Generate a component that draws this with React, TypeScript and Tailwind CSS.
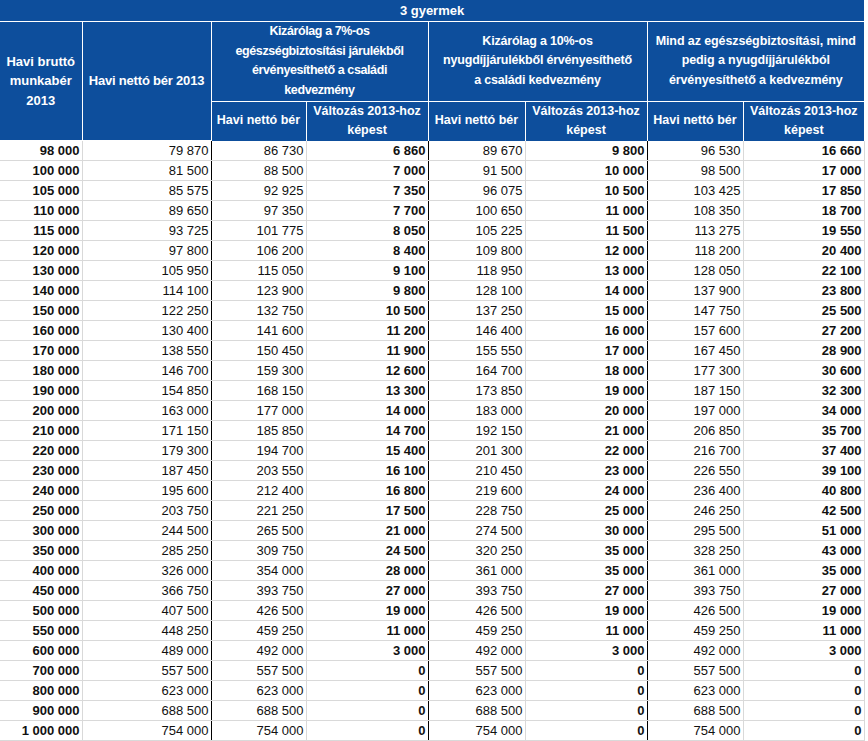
import React from "react";

const rows: number[][] = [
  [98000, 79870, 86730, 6860, 89670, 9800, 96530, 16660],
  [100000, 81500, 88500, 7000, 91500, 10000, 98500, 17000],
  [105000, 85575, 92925, 7350, 96075, 10500, 103425, 17850],
  [110000, 89650, 97350, 7700, 100650, 11000, 108350, 18700],
  [115000, 93725, 101775, 8050, 105225, 11500, 113275, 19550],
  [120000, 97800, 106200, 8400, 109800, 12000, 118200, 20400],
  [130000, 105950, 115050, 9100, 118950, 13000, 128050, 22100],
  [140000, 114100, 123900, 9800, 128100, 14000, 137900, 23800],
  [150000, 122250, 132750, 10500, 137250, 15000, 147750, 25500],
  [160000, 130400, 141600, 11200, 146400, 16000, 157600, 27200],
  [170000, 138550, 150450, 11900, 155550, 17000, 167450, 28900],
  [180000, 146700, 159300, 12600, 164700, 18000, 177300, 30600],
  [190000, 154850, 168150, 13300, 173850, 19000, 187150, 32300],
  [200000, 163000, 177000, 14000, 183000, 20000, 197000, 34000],
  [210000, 171150, 185850, 14700, 192150, 21000, 206850, 35700],
  [220000, 179300, 194700, 15400, 201300, 22000, 216700, 37400],
  [230000, 187450, 203550, 16100, 210450, 23000, 226550, 39100],
  [240000, 195600, 212400, 16800, 219600, 24000, 236400, 40800],
  [250000, 203750, 221250, 17500, 228750, 25000, 246250, 42500],
  [300000, 244500, 265500, 21000, 274500, 30000, 295500, 51000],
  [350000, 285250, 309750, 24500, 320250, 35000, 328250, 43000],
  [400000, 326000, 354000, 28000, 361000, 35000, 361000, 35000],
  [450000, 366750, 393750, 27000, 393750, 27000, 393750, 27000],
  [500000, 407500, 426500, 19000, 426500, 19000, 426500, 19000],
  [550000, 448250, 459250, 11000, 459250, 11000, 459250, 11000],
  [600000, 489000, 492000, 3000, 492000, 3000, 492000, 3000],
  [700000, 557500, 557500, 0, 557500, 0, 557500, 0],
  [800000, 623000, 623000, 0, 623000, 0, 623000, 0],
  [900000, 688500, 688500, 0, 688500, 0, 688500, 0],
  [1000000, 754000, 754000, 0, 754000, 0, 754000, 0],
];

// 1000000 -> "1 000 000"
const fmt = (n: number) => String(n).replace(/\B(?=(\d{3})+(?!\d))/g, " ");

const boldCols = [0, 3, 5, 7];
const blackRight = [1, 3, 5];

export default function App() {
  return (
    <div className="bg-white w-[868px] h-[741px] overflow-hidden font-['Liberation_Sans',Arial,sans-serif] text-[#111]">
      <table className="border-collapse table-fixed w-[864px]">
        <colgroup>
          <col className="w-[82px]" />
          <col className="w-[129px]" />
          <col className="w-[95px]" />
          <col className="w-[122px]" />
          <col className="w-[97px]" />
          <col className="w-[122px]" />
          <col className="w-[96px]" />
          <col className="w-[121px]" />
        </colgroup>
        <thead className="bg-[#0d4e9c] text-white font-bold text-[12.5px] leading-[19.5px] text-center">
          <tr className="h-[21px]">
            <th colSpan={8} className="border-b border-white p-0 align-middle text-[13px]">3 gyermek</th>
          </tr>
          <tr className="h-[80px]">
            <th rowSpan={2} className="border-r border-b border-white p-0 align-middle text-[13px]">
              Havi bruttó
              <br />
              munkabér
              <br />
              2013
            </th>
            <th rowSpan={2} className="border-r border-b border-white p-0 align-middle whitespace-nowrap text-[13px] tracking-[-0.2px]">
              Havi nettó bér 2013
            </th>
            <th colSpan={2} className="border-r border-b border-white p-0 align-middle whitespace-nowrap tracking-[-0.4px]">
              Kizárólag a 7%-os
              <br />
              egészségbiztosítási járulékből
              <br />
              érvényesíthető a családi
              <br />
              kedvezmény
            </th>
            <th colSpan={2} className="border-r border-b border-white p-0 align-middle whitespace-nowrap tracking-[-0.2px]">
              Kizárólag a 10%-os
              <br />
              nyugdíjjárulékből érvényesíthető
              <br />
              a családi kedvezmény
            </th>
            <th colSpan={2} className="border-b border-white p-0 align-middle whitespace-nowrap tracking-[-0.1px]">
              Mind az egészségbiztosítási, mind
              <br />
              pedig a nyugdíjjárulékból
              <br />
              érvényesíthető a kedvezmény
            </th>
          </tr>
          <tr className="h-[39px]">
            <th className="border-r border-white p-0 align-middle whitespace-nowrap">Havi nettó bér</th>
            <th className="border-r border-white p-0 align-middle">
              Változás 2013-hoz
              <br />
              képest
            </th>
            <th className="border-r border-white p-0 align-middle whitespace-nowrap">Havi nettó bér</th>
            <th className="border-r border-white p-0 align-middle">
              Változás 2013-hoz
              <br />
              képest
            </th>
            <th className="border-r border-white p-0 align-middle whitespace-nowrap">Havi nettó bér</th>
            <th className="p-0 align-middle">
              Változás 2013-hoz
              <br />
              képest
            </th>
          </tr>
        </thead>
        <tbody className="text-[13px] leading-[15px]">
          {rows.map((row, i) => (
            <tr key={`row-${i}`} className="h-[20px]">
              {row.map((v, j) => (
                <td
                  key={`cell-${i}-${j}`}
                  className={
                    "p-0 pr-[2px] pb-[2px] text-right align-bottom border-b border-[#d9d9d9] " +
                    (blackRight.includes(j) ? "border-r border-r-black " : "border-r ") +
                    (boldCols.includes(j) ? "font-bold" : "font-normal")
                  }
                >
                  {fmt(v)}
                </td>
              ))}
            </tr>
          ))}
        </tbody>
      </table>
    </div>
  );
}
